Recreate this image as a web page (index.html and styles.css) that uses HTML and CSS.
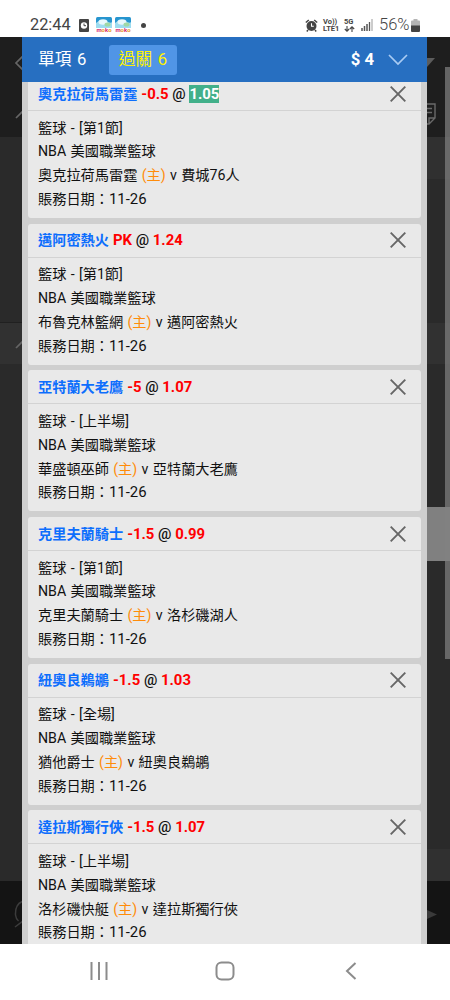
FILE: index.html
```html
<!DOCTYPE html>
<html lang="zh-Hant">
<head>
    <meta charset="utf-8">
    <title>過關</title>
    <link rel="stylesheet" href="styles.css">
</head>
<body>
<div class="status">
    <span class="clock">22:44</span>
    <svg class="st-app" width="10" height="13" viewBox="0 0 10 13"><rect width="10" height="13" rx="1" fill="#444"/><circle cx="5" cy="6.5" r="3.2" fill="#fff"/><path d="M5 4.5v2.2h2" stroke="#444" fill="none"/></svg>
    <span class="moko">
        <svg width="16" height="11" viewBox="0 0 16 11"><rect width="16" height="11" rx="1.5" fill="#2795cf"/><path d="M0 6q5-5 10-2t6 1v6H0z" fill="#9ddcf0"/><ellipse cx="7" cy="5" rx="4.5" ry="2.8" fill="#e8f8fc"/><ellipse cx="11.5" cy="7.5" rx="3" ry="2" fill="#9fd8a5"/></svg>
        <b>m<i>o</i>k<i>o</i></b>
    </span>
    <span class="moko">
        <svg width="16" height="11" viewBox="0 0 16 11"><rect width="16" height="11" rx="1.5" fill="#2795cf"/><path d="M0 6q5-5 10-2t6 1v6H0z" fill="#9ddcf0"/><ellipse cx="7" cy="5" rx="4.5" ry="2.8" fill="#e8f8fc"/><ellipse cx="11.5" cy="7.5" rx="3" ry="2" fill="#9fd8a5"/></svg>
        <b>m<i>o</i>k<i>o</i></b>
    </span>
    <span class="dot"></span>
    <svg class="st-alarm" width="13" height="13" viewBox="0 0 13 13"><circle cx="6.5" cy="7" r="5" fill="#444"/><path d="M.8 3.5l3-2.5M12.2 3.5l-3-2.5M3 11l-1.2 1.5M10 11l1.2 1.5" stroke="#444" stroke-width="1.5"/><path d="M6.5 4.2v3h2.3" stroke="#fff" fill="none" stroke-width="1.1"/></svg>
    <span class="net volte">Vo))<br>LTE1</span>
    <span class="net five">5G<svg width="11" height="6" viewBox="0 0 11 6"><path d="M3 0v5M.8 3L3 5.2 5.2 3M8 6V1M5.800 3L8 .8 10.2 3" stroke="#444" stroke-width="1.1" fill="none"/></svg></span>
    <svg class="st-signal" width="12" height="12" viewBox="0 0 12 12"><path d="M1 9v3M3.5 7v5M6 5v7" stroke="#555" stroke-width="1.5"/><path d="M8.5 3v9" stroke="#555" stroke-width="1.3"/><path d="M11 0v12" stroke="#bbb" stroke-width="1.5"/></svg>
    <span class="percent">56%</span>
    <svg class="st-battery" width="9" height="13" viewBox="0 0 9 13"><path d="M2.5 0h4v1.5H8q1 0 1 1V7H0V2.5q0-1 1-1h1.5z" fill="#b5b5b5"/><path d="M0 6.5h9V12q0 1-1 1H1q-1 0-1-1z" fill="#444"/></svg>
</div>

<div class="main">
    <div class="side left">
        <div class="bar top">
            <svg width="22" height="100" viewBox="0 0 22 100"><path d="M24 18l-8 8 8 8M16 81l8-8" stroke="#666" stroke-width="1.7" fill="none"/></svg>
        </div>
        <div class="rows"></div>
        <div class="bar group">
            <svg width="22" height="41" viewBox="0 0 22 41"><path d="M16 25l8-8" stroke="#656565" stroke-width="1.7"/></svg>
        </div>
        <div class="rows fill"></div>
        <div class="bar bottom">
            <svg width="22" height="63" viewBox="0 0 22 63"><path d="M24 20q-9 2-8.500 14 .5 4 3 6M15 46l8-6" stroke="#3c3c3c" stroke-width="1.5" fill="none"/></svg>
        </div>
    </div>

    <div class="slip">
        <div class="slip-head">
            <span class="tab">單項 6</span>
            <span class="tab active">過關 6</span>
            <span class="amount">$ 4</span>
            <svg width="20" height="12" viewBox="0 0 20 12"><path d="M1 1l9 9 9-9" stroke="#a9cbf3" stroke-width="1.7" fill="none"/></svg>
        </div>
        <div class="list">
            <div class="card">
                <div class="title"><span class="team">奧克拉荷馬雷霆</span><span class="bet"><b>-0.5</b> @ <b class="changed">1.05</b></span><svg class="close" viewBox="0 0 16 16"><path d="M.7.7l14.6 14.6M15.3.7L.7 15.3"/></svg></div>
                <div class="info">
                    <p>籃球 - [第1節]</p>
                    <p>NBA 美國職業籃球</p>
                    <p>奧克拉荷馬雷霆 <em>(主)</em> v 費城76人</p>
                    <p>賬務日期：<span class="date">11-26</span></p>
                </div>
            </div>
            <div class="card">
                <div class="title"><span class="team">邁阿密熱火</span><span class="bet"><b>PK</b> @ <b>1.24</b></span><svg class="close" viewBox="0 0 16 16"><path d="M.7.7l14.6 14.6M15.3.7L.7 15.3"/></svg></div>
                <div class="info">
                    <p>籃球 - [第1節]</p>
                    <p>NBA 美國職業籃球</p>
                    <p>布魯克林籃網 <em>(主)</em> v 邁阿密熱火</p>
                    <p>賬務日期：<span class="date">11-26</span></p>
                </div>
            </div>
            <div class="card">
                <div class="title"><span class="team">亞特蘭大老鷹</span><span class="bet"><b>-5</b> @ <b>1.07</b></span><svg class="close" viewBox="0 0 16 16"><path d="M.7.7l14.6 14.6M15.3.7L.7 15.3"/></svg></div>
                <div class="info">
                    <p>籃球 - [上半場]</p>
                    <p>NBA 美國職業籃球</p>
                    <p>華盛頓巫師 <em>(主)</em> v 亞特蘭大老鷹</p>
                    <p>賬務日期：<span class="date">11-26</span></p>
                </div>
            </div>
            <div class="card">
                <div class="title"><span class="team">克里夫蘭騎士</span><span class="bet"><b>-1.5</b> @ <b>0.99</b></span><svg class="close" viewBox="0 0 16 16"><path d="M.7.7l14.6 14.6M15.3.7L.7 15.3"/></svg></div>
                <div class="info">
                    <p>籃球 - [第1節]</p>
                    <p>NBA 美國職業籃球</p>
                    <p>克里夫蘭騎士 <em>(主)</em> v 洛杉磯湖人</p>
                    <p>賬務日期：<span class="date">11-26</span></p>
                </div>
            </div>
            <div class="card">
                <div class="title"><span class="team">紐奧良鵜鶘</span><span class="bet"><b>-1.5</b> @ <b>1.03</b></span><svg class="close" viewBox="0 0 16 16"><path d="M.7.7l14.6 14.6M15.3.7L.7 15.3"/></svg></div>
                <div class="info">
                    <p>籃球 - [全場]</p>
                    <p>NBA 美國職業籃球</p>
                    <p>猶他爵士 <em>(主)</em> v 紐奧良鵜鶘</p>
                    <p>賬務日期：<span class="date">11-26</span></p>
                </div>
            </div>
            <div class="card">
                <div class="title"><span class="team">達拉斯獨行俠</span><span class="bet"><b>-1.5</b> @ <b>1.07</b></span><svg class="close" viewBox="0 0 16 16"><path d="M.7.7l14.6 14.6M15.3.7L.7 15.3"/></svg></div>
                <div class="info">
                    <p>籃球 - [上半場]</p>
                    <p>NBA 美國職業籃球</p>
                    <p>洛杉磯快艇 <em>(主)</em> v 達拉斯獨行俠</p>
                    <p>賬務日期：<span class="date">11-26</span></p>
                </div>
            </div>
        </div>
    </div>

    <div class="side right">
        <div class="bar top">
            <svg width="23" height="100" viewBox="0 0 23 100"><path d="M0 21h8l-8 9z" fill="#5c5c5c"/><path d="M-4 67H8v14l-6 6h-5M2 87v-6h6M-1 71.5h6M-1 75.5h6" stroke="#6a6a6a" stroke-width="1.4" fill="none"/></svg>
        </div>
        <div class="rows"></div>
        <div class="bar group"></div>
        <div class="rows fill"></div>
        <div class="bar bottom">
            <svg width="23" height="63" viewBox="0 0 23 63"><path d="M0 29l10 4.500L0 38z" fill="#3a3a3a"/></svg>
        </div>
        <div class="handle"></div>
        <div class="scroll"></div>
    </div>
</div>

<div class="nav">
    <svg width="18" height="18" viewBox="0 0 18 18"><path d="M1.500 0v18M9 0v18M16.500 0v18"/></svg>
    <svg class="home" width="20" height="20" viewBox="0 0 20 20"><rect x="1.5" y="1.5" width="17" height="17" rx="5"/></svg>
    <svg width="12" height="18" viewBox="0 0 12 18"><path d="M10.5 1L2 9l8.5 8"/></svg>
</div>
</body>
</html>
```
FILE: styles.css
```css
* {
    box-sizing: border-box;
}
body {
    display: flex;
    flex-direction: column;
    height: 1000px;
    margin: 0;
    overflow: hidden;
    background: #fff;
    color: #111;
    font-family: Roboto, "Noto Sans CJK TC", sans-serif;
    font-size: 14.2px;
}
svg {
    display: block;
    flex: none;
}
.status {
    display: flex;
    align-items: center;
    height: 37px;
    padding: 13px 30px 0 30px;
    color: #444;
}
.clock {
    width: 49px;
    font-size: 16.3px;
    line-height: 24px;
}
.moko {
    width: 16px;
    margin-right: 3px;
}
.st-app {
    margin-right: 7px;
}
.moko b {
    display: block;
    height: 5px;
    color: #d8246c;
    font-size: 6px;
    line-height: 4px;
    text-align: center;
}
.moko i {
    color: #e59a25;
    font-style: normal;
}
.dot {
    width: 5px;
    height: 5px;
    margin-left: 7px;
    border-radius: 50%;
    background: #444;
}
.st-alarm {
    margin-left: auto;
}
.net {
    font-size: 7.5px;
    font-weight: bold;
    line-height: 7px;
}
.volte {
    width: 17px;
    margin-left: 5px;
}
.five {
    width: 12px;
    margin: 0 5px 0 4px;
}
.five svg {
    margin-top: 1px;
}
.percent {
    width: 32px;
    margin-left: 6px;
    font-size: 16.5px;
    font-weight: 300;
    line-height: 24px;
}
.main {
    display: flex;
    height: 907px;
    overflow: hidden;
    background: #2a2a2a;
}
.side {
    position: relative;
    display: flex;
    flex: none;
    flex-direction: column;
    overflow: hidden;
}
.left {
    width: 22px;
}
.right {
    width: 23px;
}
.bar.top {
    height: 100px;
    background: #1e1e1e;
}
.rows {
    height: 186px;
    border-bottom: 1px solid #202020;
    background: #2a2a2a;
}
.right .rows {
    border: 0;
    background: linear-gradient(#303030 42px, #2a2a2a 42px);
}
.rows.fill {
    flex: 1;
    height: auto;
    border: 0;
}
.right .rows.fill {
    background: linear-gradient(to top, #303030 32px, #2a2a2a 32px);
}
.bar.group {
    height: 41px;
    background: #313131;
}
.bar.bottom {
    height: 63px;
    background: #141414;
}
.handle {
    position: absolute;
    top: 470px;
    left: 0;
    width: 23px;
    height: 54px;
    background: #808080;
}
.scroll {
    position: absolute;
    top: 30px;
    right: 0;
    width: 5px;
    height: 592px;
    background: rgba(130, 130, 130, 0.7);
}
.slip {
    display: flex;
    flex: 1;
    flex-direction: column;
    background: #cfcfcf;
}
.slip-head {
    display: flex;
    flex: none;
    align-items: center;
    height: 45px;
    padding: 0 19px 0 16px;
    background: #276fc1;
    color: #fff;
    font-size: 16.7px;
}
.tab {
    width: 71px;
    line-height: 29px;
    padding-bottom: 1px;
    word-spacing: 1.5px;
}
.tab.active {
    width: 68px;
    height: 30px;
    border-radius: 3px;
    background: #5095e6;
    color: #fff200;
    text-align: center;
}
.amount {
    margin: 0 14px 1px auto;
    font-weight: bold;
}
.list {
    display: flex;
    flex: 1;
    flex-direction: column;
    gap: 5.7px;
    min-height: 0;
    overflow: hidden;
    padding: 0 6px;
}
.card {
    flex: none;
    height: 141px;
    border-radius: 3px;
    background: #e9e9e9;
}
/* first card is scrolled under the header */
.card:first-child {
    margin-top: -5px;
}
.title {
    display: flex;
    align-items: center;
    height: 34px;
    padding: 0 15px 0 10px;
    border-bottom: 1px solid #d3d3d3;
    line-height: 20px;
}
.team {
    margin-right: 4px;
    color: #0d6efd;
    font-weight: bold;
}
.bet {
    font-size: 14.9px;
    font-weight: 500;
}
.bet b {
    color: #f00;
}
.bet .changed {
    display: inline-block;
    height: 18px;
    background: #42b08a;
    color: #fff;
    line-height: 18px;
}
.close {
    width: 16px;
    height: 16px;
    margin-left: auto;
    fill: none;
    stroke: #666;
    stroke-width: 1.9;
}
.info {
    padding: 5.6px 10px 0;
}
.info p {
    margin: 0;
    line-height: 23.8px;
    white-space: nowrap;
    word-spacing: 0.8px;
}
.info em {
    color: #ff8c0a;
    font-style: normal;
}
.date {
    font-size: 14.9px;
    line-height: 1;
}
.nav {
    display: flex;
    align-items: center;
    justify-content: space-between;
    height: 56px;
    padding: 0 93px 2px 90px;
    fill: none;
    stroke: #8c8c8c;
    stroke-width: 2;
}
.home {
    margin-right: 3px;
}
```
